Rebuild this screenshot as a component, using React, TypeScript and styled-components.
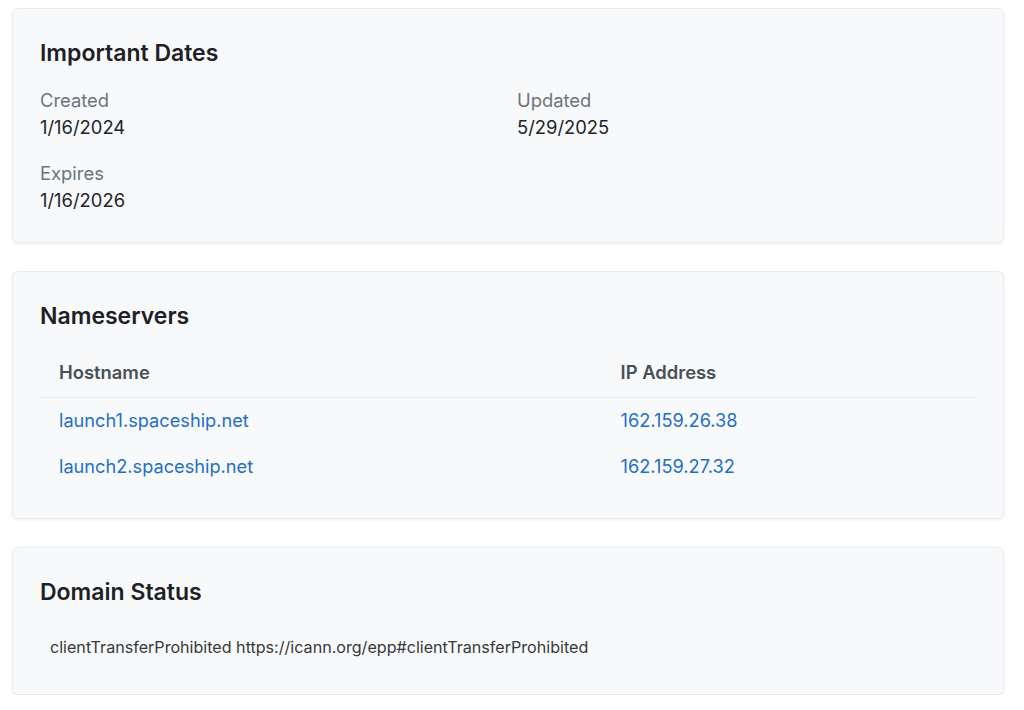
import React from "react";
import styled, { createGlobalStyle } from "styled-components";

const Global = createGlobalStyle`
  html, body { margin: 0; padding: 0; background: #ffffff; }
  body { font-family: Inter, "Noto Sans", "Liberation Sans", sans-serif; color: #212529; }
  * { box-sizing: border-box; }
`;

const Page = styled.div`
  width: 992px;
  margin: 8px 0 0 12px;
  display: flex;
  flex-direction: column;
  gap: 28px;
`;

const Card = styled.section`
  background: #f8f9fa;
  border: 1px solid #e9ecef;
  border-radius: 6px;
  box-shadow: 0 1px 3px rgba(0, 0, 0, 0.07);
  padding: 30px 27px 28px;
`;

const Title = styled.h2`
  margin: 0 0 20px;
  font-size: 23px;
  font-weight: 600;
  line-height: 28px;
  color: #1d2125;
`;

const DateGrid = styled.div`
  display: grid;
  grid-template-columns: 1fr 1fr;
  column-gap: 18px;
  row-gap: 19px;
`;

const DateItem = styled.div`
  display: flex;
  flex-direction: column;
`;

const Label = styled.span`
  font-size: 18.4px;
  line-height: 27px;
  color: #6c757d;
`;

const Value = styled.span`
  font-size: 18.4px;
  line-height: 27px;
  color: #212529;
`;

const Table = styled.table`
  width: 100%;
  border-collapse: collapse;
`;

const HeadCell = styled.th<{ $w?: string }>`
  text-align: left;
  font-size: 18.4px;
  font-weight: 600;
  color: #495057;
  padding: 9px 19px 11px;
  line-height: 27px;
  border-bottom: 1px solid #e9ecef;
  width: ${(p) => p.$w || "auto"};
`;

const Cell = styled.td`
  padding: 9px 19px 10px;
  font-size: 18.2px;
  line-height: 27px;
`;

const Link = styled.a`
  color: #1f6fc8;
  text-decoration: none;
`;

const StatusText = styled.p`
  margin: 0;
  padding: 9px 10px 7px;
  font-size: 16.1px;
  line-height: 24px;
  color: #343a40;
`;

const nameservers = [
  { host: "launch1.spaceship.net", ip: "162.159.26.38" },
  { host: "launch2.spaceship.net", ip: "162.159.27.32" },
];

export default function App() {
  return (
    <>
      <Global />
      <Page>
        <Card>
          <Title>Important Dates</Title>
          <DateGrid>
            <DateItem>
              <Label>Created</Label>
              <Value>1/16/2024</Value>
            </DateItem>
            <DateItem>
              <Label>Updated</Label>
              <Value>5/29/2025</Value>
            </DateItem>
            <DateItem>
              <Label>Expires</Label>
              <Value>1/16/2026</Value>
            </DateItem>
          </DateGrid>
        </Card>
        <Card>
          <Title>Nameservers</Title>
          <Table>
            <thead>
              <tr>
                <HeadCell $w="60%">Hostname</HeadCell>
                <HeadCell>IP Address</HeadCell>
              </tr>
            </thead>
            <tbody>
              {nameservers.map((n) => (
                <tr key={n.host}>
                  <Cell>
                    <Link href="#">{n.host}</Link>
                  </Cell>
                  <Cell>
                    <Link href="#">{n.ip}</Link>
                  </Cell>
                </tr>
              ))}
            </tbody>
          </Table>
        </Card>
        <Card>
          <Title>Domain Status</Title>
          <StatusText>clientTransferProhibited https://icann.org/epp#clientTransferProhibited</StatusText>
        </Card>
      </Page>
    </>
  );
}
